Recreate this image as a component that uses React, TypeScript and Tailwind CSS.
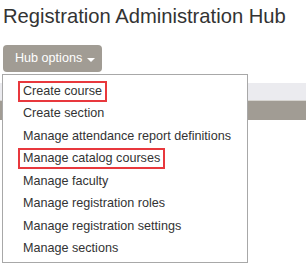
const items = [
  { label: "Create course", marked: true },
  { label: "Create section", marked: false },
  { label: "Manage attendance report definitions", marked: false },
  { label: "Manage catalog courses", marked: true },
  { label: "Manage faculty", marked: false },
  { label: "Manage registration roles", marked: false },
  { label: "Manage registration settings", marked: false },
  { label: "Manage sections", marked: false },
]

const App = () => {
  return (
    <main className="w-[306px] h-[273px] bg-white overflow-hidden font-['Liberation_Sans',Arial,sans-serif]">
      <h1 className="pl-[3px] pt-[3px] text-[20.2px] leading-[26px] text-[#333333] whitespace-nowrap">
        Registration Administration Hub
      </h1>

      <div className="relative mt-[16px]">
        <button className="ml-[3px] h-[27px] w-[99px] rounded-[4px] bg-[#a19c94] pl-[12px] text-left text-[12.6px] text-white flex items-center whitespace-nowrap">
          Hub options
          <span className="ml-[5px] mt-[2px] border-x-[4px] border-t-[4px] border-x-transparent border-t-white" />
        </button>

        {/* page content behind the open menu */}
        <div className="mt-[11px] h-[17px] bg-[#ebebef]" />
        <div className="h-px bg-[#d6d4d0]" />
        <div className="h-[19px] bg-[#a19c94]" />

        <ul className="absolute left-[2px] top-[29px] w-[246px] border border-[#a8a8a8] bg-white pt-[5px] pb-[2px] text-[12.6px] text-[#333333] whitespace-nowrap">
          {items.map((item) => (
            <li key={item.label} className="h-[22.5px] flex items-center pl-[17px]">
              <span
                className={
                  item.marked
                    ? "px-[3px] h-[21px] flex items-center border-2 border-[#e8383d] -ml-[2px]"
                    : "px-[3px]"
                }
              >
                {item.label}
              </span>
            </li>
          ))}
        </ul>
      </div>
    </main>
  )
}

export default App
